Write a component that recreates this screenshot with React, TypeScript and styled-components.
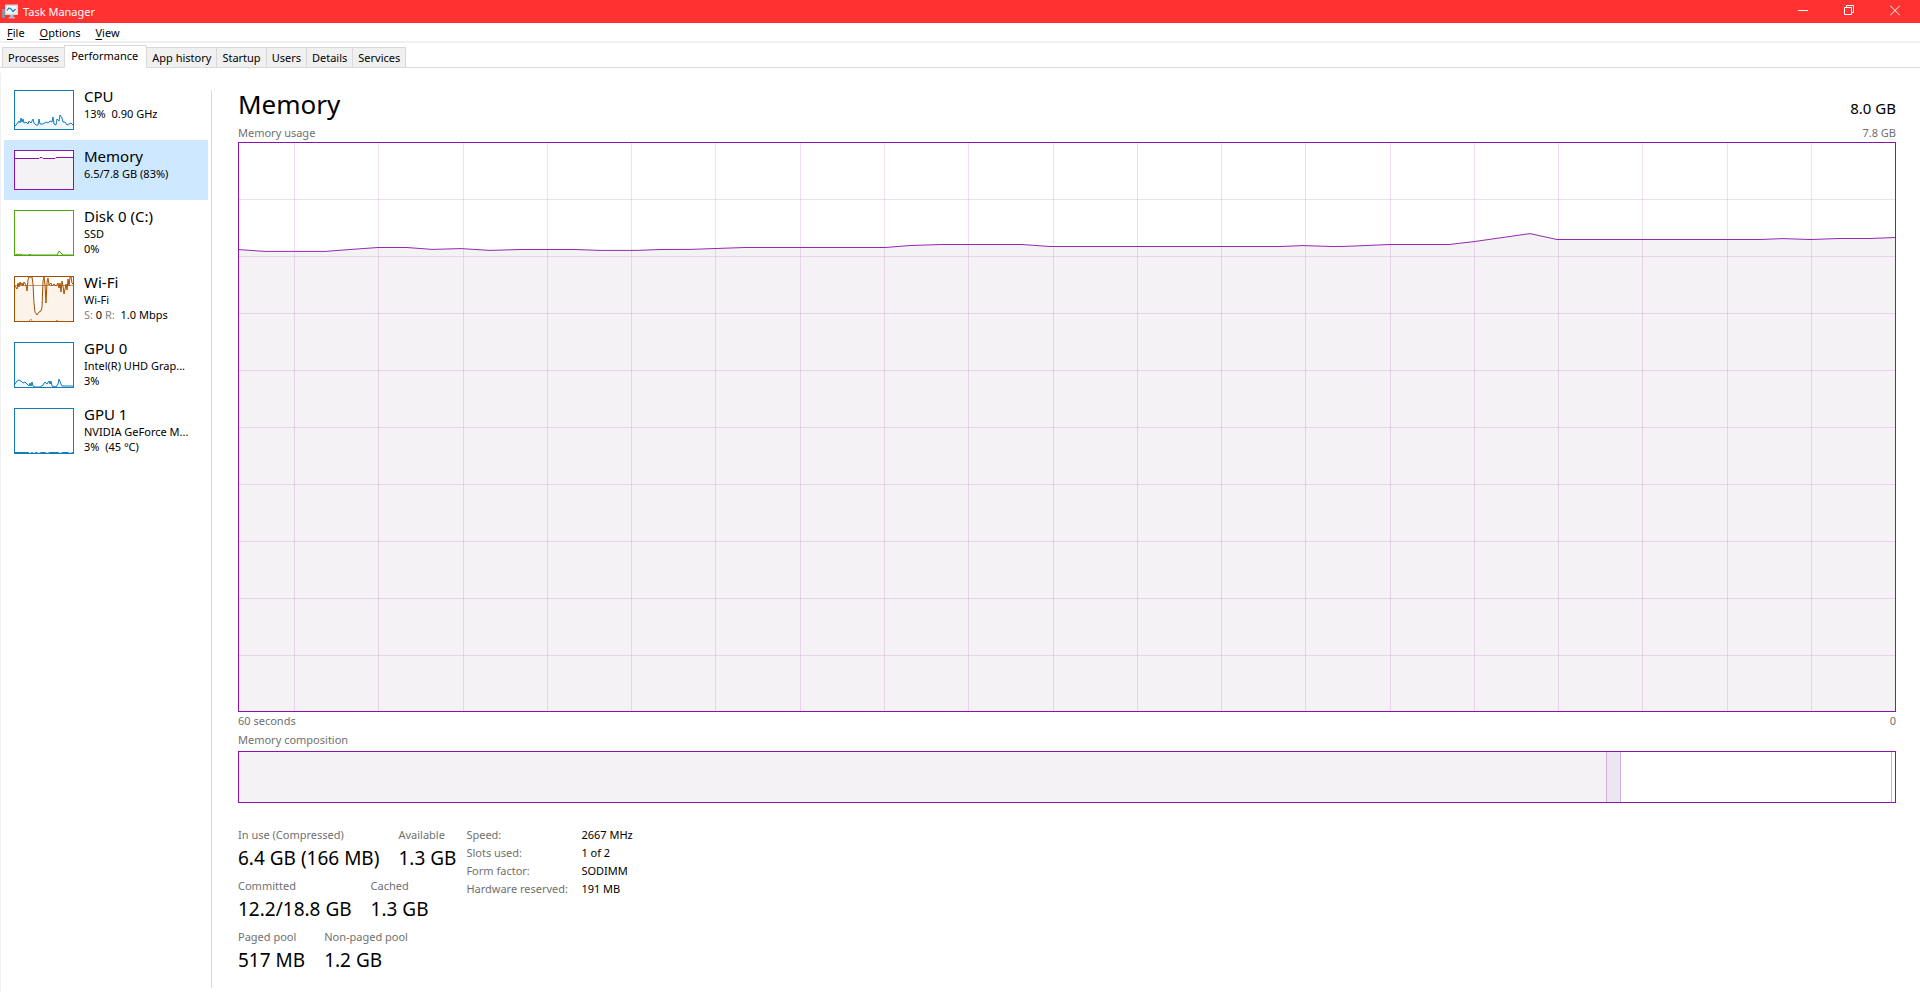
import React, { useState } from "react";
import styled, { createGlobalStyle } from "styled-components";

const GlobalStyle = createGlobalStyle`
  *, *::before, *::after { box-sizing: border-box; }
  body {
    margin: 0;
    background: #fff;
    color: #000;
    font-family: "Segoe UI", "Noto Sans", sans-serif;
    font-size: 11px;
    line-height: 15px;
  }
  button { font: inherit; color: inherit; border: 0; padding: 0; margin: 0; background: none; text-align: left; }
  h1, h2, p, dl, dd, dt { margin: 0; font-weight: 400; }
`;

const Window = styled.div`
  display: flex;
  flex-direction: column;
  min-height: 100vh;
  padding-bottom: 5px;
`;

const TitleBar = styled.header`
  display: flex;
  align-items: center;
  gap: 5px;
  height: 23px;
  flex: none;
  padding: 0 2px;
  background: #ff3131;
  color: #fff;
`;

const Caption = styled.span`
  flex: 1;
`;

const CaptionButtons = styled.div`
  display: flex;
  align-self: stretch;
`;

const CaptionButton = styled.button`
  display: flex;
  align-items: center;
  justify-content: center;
  width: 46px;
  padding-bottom: 2px;
`;

const MenuBar = styled.nav`
  display: flex;
  gap: 15px;
  height: 20px;
  flex: none;
  padding: 0 7px;
  border-bottom: 2px solid #f0f0f0;
`;

const MenuItem = styled.button`
  line-height: 20px;
`;

const MenuText = styled.span`
  display: block;

  &::first-letter {
    text-decoration: underline;
    text-underline-offset: 2px;
  }
`;

const TabStrip = styled.div`
  display: flex;
  align-items: flex-end;
  height: 25px;
  flex: none;
  padding-left: 2px;
  box-shadow: inset 0 -1px #d9d9d9;
`;

const Tab = styled.button<{ $active: boolean }>`
  height: ${(p) => (p.$active ? 23 : 21)}px;
  padding: ${(p) => (p.$active ? "0 8px 3px 6px" : "0 5px")};
  border: 1px solid #d9d9d9;
  border-left-width: ${(p) => (p.$active ? 1 : 0)}px;
  border-bottom-color: ${(p) => (p.$active ? "#fff" : "#d9d9d9")};
  background: ${(p) => (p.$active ? "#fff" : "#f0f0f0")};

  &:first-child { border-left-width: 1px; }
  &:has(+ [aria-selected="true"]) { border-right-width: 0; }
`;

const Body = styled.div`
  display: flex;
  flex: 1;
  margin-top: 5px;
  padding: 7px 0 4px;
  border-left: 1px solid #f0f0f0;
`;

const Sidebar = styled.nav`
  width: 210px;
  flex: none;
  padding: 0 3px;
`;

const Resource = styled.button<{ $active: boolean }>`
  display: flex;
  align-items: flex-start;
  gap: 10px;
  width: 204px;
  padding: 10px;
  background: ${(p) => (p.$active ? "#cde8ff" : "transparent")};
`;

const Thumb = styled.svg<{ $color: string; $tall: boolean }>`
  display: block;
  flex: none;
  width: 60px;
  height: ${(p) => (p.$tall ? 46 : 40)}px;
  border: 1px solid ${(p) => p.$color};
  background: #fff;
`;

const ResourceText = styled.span`
  display: block;
  min-width: 0;
  margin: -4px 0 -8px;
`;

const ResourceName = styled.span`
  display: block;
  font-size: 15px;
  line-height: 20px;
`;

const ResourceLine = styled.span`
  display: block;
  white-space: pre;
`;

const Muted = styled.span`
  color: #838383;
`;

const Details = styled.main`
  display: flex;
  flex-direction: column;
  flex: 1;
  min-width: 0;
  margin-top: 10px;
  padding: 0 24px 15px 26px;
  border-left: 1px solid #d9d9d9;
`;

const Heading = styled.div`
  display: flex;
  justify-content: space-between;
  align-items: baseline;
  margin: -4px 0 3px;
`;

const Title = styled.h1`
  font-size: 26px;
  line-height: 36px;
`;

const Capacity = styled.span`
  font-size: 15px;
`;

const LabelRow = styled.div<{ $after: number }>`
  display: flex;
  justify-content: space-between;
  margin-bottom: ${(p) => p.$after}px;
  color: #707070;
`;

const ChartFrame = styled.div`
  flex: 1 0 200px;
  height: 0;
  margin-bottom: 1px;
  border: 1px solid #8b12ae;
`;

const ChartSvg = styled.svg`
  display: block;
  width: 100%;
  height: 100%;
`;

const Composition = styled.div`
  display: flex;
  height: 52px;
  flex: none;
  border: 1px solid #8b12ae;
`;

const Segment = styled.div<{ $share: number; $fill: string }>`
  flex: ${(p) => p.$share} 0 0;
  background: ${(p) => p.$fill};

  & + & { border-left: 1px solid #cfaedb; }
`;

const Stats = styled.section`
  display: flex;
  gap: 10px;
  margin-top: 24px;
`;

const StatColumn = styled.div`
  display: flex;
  flex-direction: column;
  gap: 7px;
`;

const StatRow = styled.dl`
  display: flex;
  gap: 19px;
`;

const StatLabel = styled.dt`
  margin-bottom: 3px;
  color: #707070;
`;

const StatValue = styled.dd`
  font-size: 19px;
  line-height: 26px;
  white-space: nowrap;
`;

const Facts = styled.table`
  align-self: flex-start;
  border-collapse: collapse;
  line-height: 15px;

  th, td { padding: 0 0 3px; font-weight: 400; text-align: left; }
  th { width: 115px; color: #707070; }
`;

const GRID_X = Array.from({ length: 19 }, (_, i) => Math.round(55 + i * 84.28) + 0.5);
const GRID_Y = Array.from({ length: 9 }, (_, i) => 56.5 + i * 57);

const USAGE =
  "-1,106.5 26,108.4 86,108.4 111,106.5 139,104.5 168,104.5 193,106.4 222,105.6 251,107.4 281,106.5 336,106.5 361,107.4 398,107.4 421,106.5 451,106.4 477,105.5 506,104.5 646,104.5 671,102.5 703,101.5 783,101.5 811,103.5 1041,103.5 1064,102.6 1093,103.5 1106,103.4 1151,101.5 1210,101.5 1235,98.6 1291,90.6 1318,96.5 1521,96.5 1544,95.6 1571,96.5 1601,95.5 1631,95.5 1657,94.5";

function UsageChart() {
  return (
    <ChartFrame>
      <ChartSvg viewBox="0 0 1656 568" preserveAspectRatio="none" role="img" aria-label="Memory usage over 60 seconds">
        <polygon points={`${USAGE} 1657,568 -1,568`} fill="#f4f2f5" />
        <g stroke="#8b0a96" strokeOpacity="0.13">
          {GRID_X.map((x) => (
            <line key={x} x1={x} x2={x} y1="0" y2="568" vectorEffect="non-scaling-stroke" />
          ))}
          {GRID_Y.map((y) => (
            <line key={y} x1="0" x2="1656" y1={y} y2={y} vectorEffect="non-scaling-stroke" />
          ))}
        </g>
        <polyline points={USAGE} fill="none" stroke="#9528b4" strokeWidth="1" vectorEffect="non-scaling-stroke" />
      </ChartSvg>
    </ChartFrame>
  );
}

type ResourceInfo = {
  name: string;
  lines: React.ReactNode[];
  color: string;
  fill: string;
  series: string;
  extra?: React.ReactNode;
};

const RESOURCES: ResourceInfo[] = [
  {
    name: "CPU",
    lines: ["13%  0.90 GHz"],
    color: "#117dbb",
    fill: "#f1f6fa",
    series:
      "0,35 2,33 4,30 5,32 6,27 7,31 8,28 9,32 11,31 13,33 14,30 16,32 18,28 19,32 21,34 23,34 24,28 25,33 28,33 31,31 33,32 35,30 37,31 38,26 39,33 41,34 42,28 44,30 45,24 47,27 48,31 50,31 52,34 54,33 56,32 58,34",
  },
  {
    name: "Memory",
    lines: ["6.5/7.8 GB (83%)"],
    color: "#8b12ae",
    fill: "#f4f2f5",
    series: "0,7.5 24,7.5 25,6.5 27,6.5 28,7.5 40,7.5 41,6.5 58,6.5",
  },
  {
    name: "Disk 0 (C:)",
    lines: ["SSD", "0%"],
    color: "#4da60c",
    fill: "#eff7e9",
    series: "0,44 3,43 4,44 6,43 7,44 14,44 15,43 16,44 42,44 44,40 46,42 47,43 48,44 58,44",
  },
  {
    name: "Wi-Fi",
    lines: [
      "Wi-Fi",
      <React.Fragment key="rates">
        <Muted>S:</Muted> 0 <Muted>R:</Muted>{"  1.0 Mbps"}
      </React.Fragment>,
    ],
    color: "#a74f01",
    fill: "#fcf3eb",
    series:
      "0,9 2,12 3,6 4,10 5,5 6,8 7,6 8,9 9,5 11,8 12,14 13,3 14,0 17,0 18,7 19,26 20,35 22,38 24,35 26,34 27,30 28,4 29,0 30,8 31,26 32,5 33,1 34,8 36,6 37,9 39,7 41,9 43,6 44,11 45,6 46,15 47,4 48,9 49,17 51,7 52,13 53,2 54,9 55,0 56,0 57,6 58,7",
    extra: (
      <>
        <line x1="0" x2="58" y1="8.5" y2="8.5" stroke="#a74f01" strokeOpacity="0.6" />
        <path d="M14 44l2-2 1 2M41 43.5h2" fill="none" stroke="#d98f6a" />
      </>
    ),
  },
  {
    name: "GPU 0",
    lines: ["Intel(R) UHD Grap...", "3%"],
    color: "#117dbb",
    fill: "#f1f6fa",
    series:
      "0,41 2,38 4,37 6,38 8,40 10,39 12,41 14,43 15,40 16,43 17,39 18,43 20,44 25,44 28,42 30,39 32,41 34,38 35,41 36,38 37,43 41,44 43,41 44,36 46,41 47,43 52,43 58,43",
  },
  {
    name: "GPU 1",
    lines: ["NVIDIA GeForce M...", "3%  (45 °C)"],
    color: "#117dbb",
    fill: "#f1f6fa",
    series: "0,43.5 13,43.5 15,44.5 17,43.5 19,44.5 21,43.5 24,44.5 26,43.5 30,43.5 32,44.5 35,43.5 43,43.5 45,44.5 48,43.5 53,43.5 55,44.5 58,43.5",
  },
];

const TABS = ["Processes", "Performance", "App history", "Startup", "Users", "Details", "Services"];

const STATS = [
  [["In use (Compressed)", "6.4 GB (166 MB)"], ["Available", "1.3 GB"]],
  [["Committed", "12.2/18.8 GB"], ["Cached", "1.3 GB"]],
  [["Paged pool", "517 MB"], ["Non-paged pool", "1.2 GB"]],
];

const FACTS = [
  ["Speed:", "2667 MHz"],
  ["Slots used:", "1 of 2"],
  ["Form factor:", "SODIMM"],
  ["Hardware reserved:", "191 MB"],
];

function AppIcon() {
  return (
    <svg width="16" height="15" viewBox="0 0 16 15" aria-hidden="true">
      <rect x="0" y="5" width="3" height="9" fill="#8d9298" />
      <rect x="1" y="6" width="1" height="2" fill="#4fd14f" />
      <rect x="3" y="0.5" width="13" height="10.5" fill="#d5d9dc" />
      <rect x="4.5" y="2" width="10" height="7.5" fill="#f3fbff" />
      <path d="M5 6.5L7 4l2 1 2 2.5L13.5 5" fill="none" stroke="#1679ba" strokeWidth="1.2" />
      <path d="M8 11h3.500v2H13v1.500H6.500V13H8z" fill="#b4b9bd" />
    </svg>
  );
}

export default function App() {
  const [tab, setTab] = useState("Performance");
  const [selected, setSelected] = useState("Memory");

  return (
    <Window>
      <GlobalStyle />
      <TitleBar>
        <AppIcon />
        <Caption>Task Manager</Caption>
        <CaptionButtons>
          <CaptionButton aria-label="Minimize">
            <svg width="10" height="11" viewBox="0 0 10 11" stroke="#fff">
              <path d="M0 5.500h10" />
            </svg>
          </CaptionButton>
          <CaptionButton aria-label="Restore">
            <svg width="10" height="11" viewBox="0 0 10 11" fill="none" stroke="#fff">
              <path d="M0.500 2.500h7v7h-7zM2.500 2.500v-2h7v7h-2" />
            </svg>
          </CaptionButton>
          <CaptionButton aria-label="Close">
            <svg width="10" height="11" viewBox="0 0 10 11" fill="none" stroke="#fff">
              <path d="M0 0.500l10 10M10 0.500l-10 10" />
            </svg>
          </CaptionButton>
        </CaptionButtons>
      </TitleBar>

      <MenuBar>
        {["File", "Options", "View"].map((m) => (
          <MenuItem key={m}>
            <MenuText>{m}</MenuText>
          </MenuItem>
        ))}
      </MenuBar>

      <TabStrip role="tablist">
        {TABS.map((t) => (
          <Tab key={t} role="tab" aria-selected={t === tab} $active={t === tab} onClick={() => setTab(t)}>
            {t}
          </Tab>
        ))}
      </TabStrip>

      <Body>
        <Sidebar aria-label="Resources">
          {RESOURCES.map((r) => {
            const tall = r.lines.length > 1;
            const h = tall ? 44 : 38;
            return (
              <Resource key={r.name} $active={r.name === selected} onClick={() => setSelected(r.name)}>
                <Thumb $color={r.color} $tall={tall} viewBox={`0 0 58 ${h}`} aria-hidden="true">
                  <polygon points={`${r.series} 58,${h} 0,${h}`} fill={r.fill} />
                  <polyline points={r.series} fill="none" stroke={r.color} />
                  {r.extra}
                </Thumb>
                <ResourceText>
                  <ResourceName>{r.name}</ResourceName>
                  {r.lines.map((line, i) => (
                    <ResourceLine key={i}>{line}</ResourceLine>
                  ))}
                </ResourceText>
              </Resource>
            );
          })}
        </Sidebar>

        <Details>
          <Heading>
            <Title>Memory</Title>
            <Capacity>8.0 GB</Capacity>
          </Heading>
          <LabelRow $after={2}>
            <span>Memory usage</span>
            <span>7.8 GB</span>
          </LabelRow>
          <UsageChart />
          <LabelRow $after={4}>
            <span>60 seconds</span>
            <span>0</span>
          </LabelRow>
          <LabelRow $after={4}>
            <span>Memory composition</span>
          </LabelRow>
          <Composition>
            <Segment $share={1368} $fill="#f4f2f5" />
            <Segment $share={13} $fill="#ede5f2" />
            <Segment $share={270} $fill="#fff" />
            <Segment $share={3} $fill="#fff" />
          </Composition>

          <Stats>
            <StatColumn>
              {STATS.map((row) => (
                <StatRow key={row[0][0]}>
                  {row.map(([label, value]) => (
                    <div key={label}>
                      <StatLabel>{label}</StatLabel>
                      <StatValue>{value}</StatValue>
                    </div>
                  ))}
                </StatRow>
              ))}
            </StatColumn>
            <Facts>
              <tbody>
                {FACTS.map(([label, value]) => (
                  <tr key={label}>
                    <th scope="row">{label}</th>
                    <td>{value}</td>
                  </tr>
                ))}
              </tbody>
            </Facts>
          </Stats>
        </Details>
      </Body>
    </Window>
  );
}
